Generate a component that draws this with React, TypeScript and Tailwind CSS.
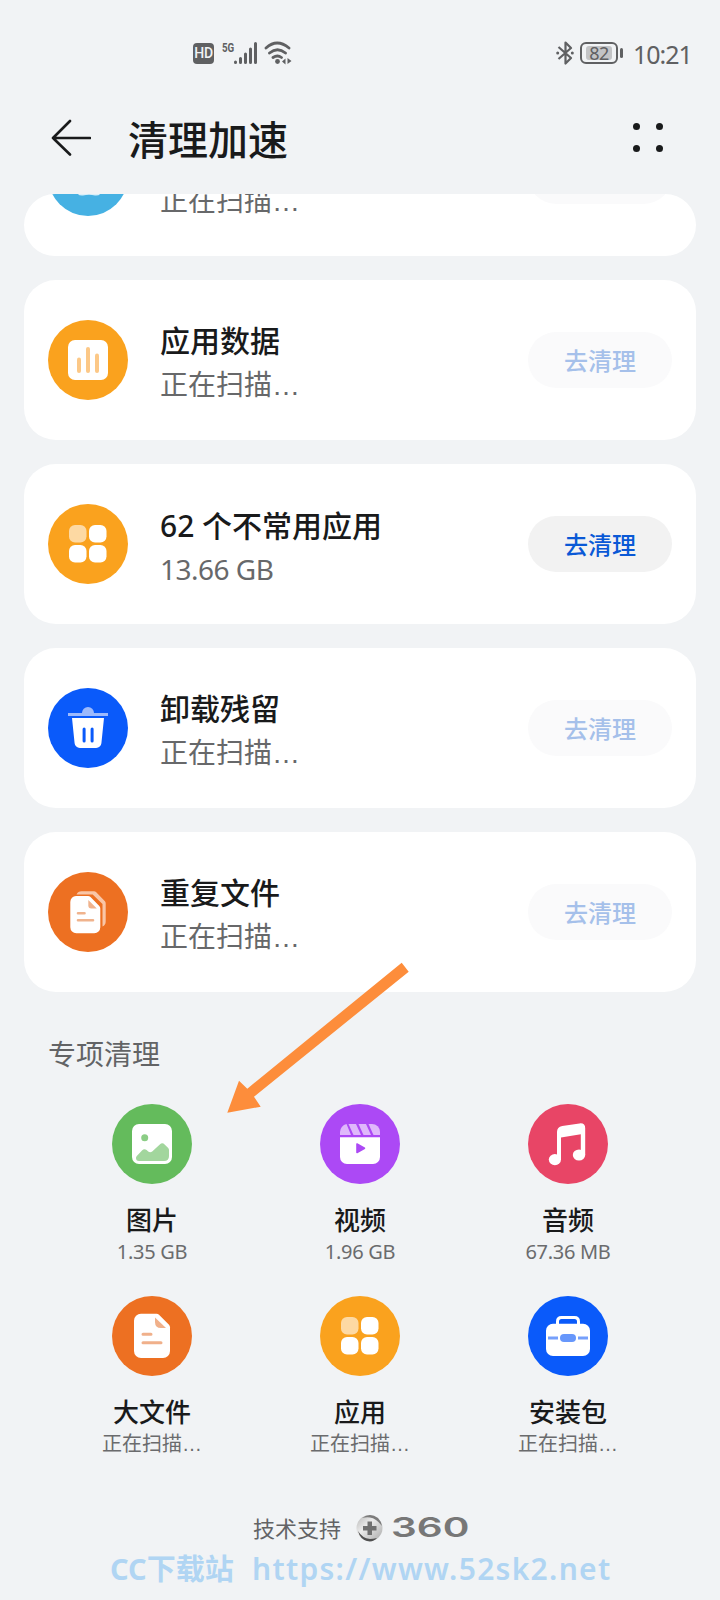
import React from "react";

type IconName = "clean" | "chart" | "apps" | "trash" | "copies" | "image" | "video" | "music" | "file" | "package";

const cards: { icon: IconName; bg: string; title: string; sub: string; active?: boolean }[] = [
    { icon: "chart", bg: "bg-[#faa21e]", title: "应用数据", sub: "正在扫描…" },
    { icon: "apps", bg: "bg-[#faa21e]", title: "62 个不常用应用", sub: "13.66 GB", active: true },
    { icon: "trash", bg: "bg-[#0a5afa]", title: "卸载残留", sub: "正在扫描…" },
    { icon: "copies", bg: "bg-[#ed7022]", title: "重复文件", sub: "正在扫描…" },
];

const special: { icon: IconName; bg: string; title: string; sub: string }[] = [
    { icon: "image", bg: "bg-[#64bb5c]", title: "图片", sub: "1.35 GB" },
    { icon: "video", bg: "bg-[#ac49f5]", title: "视频", sub: "1.96 GB" },
    { icon: "music", bg: "bg-[#e84566]", title: "音频", sub: "67.36 MB" },
    { icon: "file", bg: "bg-[#ed7022]", title: "大文件", sub: "正在扫描…" },
    { icon: "apps", bg: "bg-[#faa21e]", title: "应用", sub: "正在扫描…" },
    { icon: "package", bg: "bg-[#0a5afa]", title: "安装包", sub: "正在扫描…" },
];

const shapes: Record<IconName, React.ReactNode> = {
    clean: <path d="M29 30h24v25q0 5-6 4.500-6-1.500-12 0-6 .5-6-4.500z" fill="#d9eff9" />,
    chart: <>
        <rect x="20" y="20" width="40" height="40" rx="7" />
        <g fill="#fcc887">
            <rect x="29" y="37.5" width="4" height="15.5" rx="2" />
            <rect x="38" y="27" width="4" height="26" rx="2" />
            <rect x="47" y="33.5" width="4" height="19.5" rx="2" />
        </g>
    </>,
    apps: <>
        <rect x="21" y="21" width="17.5" height="17.5" rx="6" fill="#fdd9a3" />
        <rect x="41" y="21" width="17.5" height="17.5" rx="6" />
        <rect x="21" y="41" width="17.5" height="17.5" rx="6" />
        <rect x="41" y="41" width="17.5" height="17.5" rx="6" />
    </>,
    trash: <>
        <path d="M20 25h14a6 6 0 0 1 12 0h14v3H20z" fill="#9dbafc" />
        <path d="M24 30h32l-2.600 25.200a5.200 5.200 0 0 1-5.200 4.800H31.800a5.200 5.200 0 0 1-5.200-4.800z" />
        <rect x="34.6" y="39.5" width="3" height="15" rx="1.5" fill="#0a5afa" />
        <rect x="42.6" y="39.5" width="3" height="15" rx="1.5" fill="#0a5afa" />
    </>,
    copies: <>
        <path d="M28.500 22.500q1.500-3.200 5-3.200H46q1.200 0 2 .8l8.700 9q1 1 1 2.400v18q0 3.500-3.200 5V32L44.700 22.500z" fill="#f9c6a7" />
        <path d="M28 24h12q1.500 0 2.500 1l8.800 9q1 1 1 2.500v18.800a6 6 0 0 1-6 6H28.300a6 6 0 0 1-6-6V30a6 6 0 0 1 5.700-6z" />
        <path d="M40.300 28l8.500 8.500h-5.500a3 3 0 0 1-3-3z" fill="#f0b38d" />
        <path d="M30 41.300h6.500M30 48.300h15" stroke="#f0b38d" strokeWidth="2.600" strokeLinecap="round" />
    </>,
    image: <>
        <rect x="20" y="20" width="40" height="40" rx="7" />
        <circle cx="32.700" cy="33.700" r="3.500" fill="#8bcd85" />
        <path d="M24 54q0-1 .8-1.900l5.200-5.600q2.200-2.400 4.600-.4l1.600 1.400q2 1.600 4 0l7.600-7q2.600-2.300 4.800 0l3.600 3.600q.8.800.8 2V52q0 5-5 5H27q-3 0-3-3z" fill="#a2d69d" />
    </>,
    video: <>
        <g fill="#dfb8fb">
            <path d="M20 31v-3a8 8 0 0 1 6.500-7.900L31 31z" />
            <path d="M28.500 20h7.500l5 11h-7.500z" />
            <path d="M38.500 20H46l5 11h-7.500z" />
            <path d="M48.500 20H52a8 8 0 0 1 8 8v3h-6.500z" />
        </g>
        <path d="M20 33.300h40V53a7 7 0 0 1-7 7H27a7 7 0 0 1-7-7z" />
        <path d="M37 40v8.500l7.500-4.300z" fill="#ac49f5" stroke="#ac49f5" strokeWidth="1.600" strokeLinejoin="round" />
    </>,
    music: <>
        <path d="M29 28q0-5.200 5.200-6L51.500 19.400q5.700-.6 5.700 4.800V51h-4.400V30.200L33 33.400V56h-4z" />
        <ellipse cx="26.900" cy="55.600" rx="6.100" ry="5.600" />
        <ellipse cx="51" cy="51" rx="6.200" ry="5.600" />
    </>,
    file: <>
        <path d="M29 17.700h15.500q1.500 0 2.500 1l10 10q1 1 1 2.500V55a7 7 0 0 1-7 7H29a7 7 0 0 1-7-7V24.700a7 7 0 0 1 7-7z" />
        <path d="M43 21.500L54 32h-5q-6 0-6-6z" fill="#f0b08a" />
        <path d="M31 38.200h8M31 46.800h18" stroke="#f0b08a" strokeWidth="3" strokeLinecap="round" />
    </>,
    package: <>
        <path d="M29.500 29v-3.500q0-4 4-4h13q4 0 4 4V29" fill="none" stroke="#fff" strokeWidth="3" />
        <rect x="18" y="27.700" width="44" height="32.300" rx="7" />
        <path d="M20 40.400h10v3H20zM50 40.400h10v3H50z" fill="#76a0fb" />
        <rect x="32" y="38" width="16" height="8" rx="4" fill="#6797fb" />
    </>,
};

function RoundIcon({ name, bg }: { name: IconName; bg: string }) {
    return <div className={`w-20 h-20 shrink-0 rounded-full ${bg}`}>
        <svg viewBox="0 0 80 80" className="w-20 h-20" fill="#fff">{shapes[name]}</svg>
    </div>;
}

function Sub({ text }: { text: string }) {
    if (!text.endsWith("…")) return <>{text}</>;
    return <span className="tracking-normal">{text.slice(0, -1)}<span className="font-['Liberation_Sans']">…</span></span>;
}

function CardRow({ icon, bg, title, sub, active }: { icon: IconName; bg: string; title?: string; sub: string; active?: boolean }) {
    return <div className="w-full h-40 shrink-0 px-6 flex items-center">
        <RoundIcon name={icon} bg={bg} />
        <div className="ml-8 flex-1 flex flex-col pt-[5px]">
            <div className="h-11 text-[30px] leading-[44px] font-medium text-[#191a1b]">{title}</div>
            <div className="text-[28px] leading-[42px] tracking-[-0.5px] text-[#67686a]"><Sub text={sub} /></div>
        </div>
        <button className={`w-36 h-14 pt-px rounded-full text-2xl font-medium ${active ? "bg-[#f2f2f2] text-[#0a59d6]" : "bg-[#fafafb] text-[#a5c0ea]"}`}>去清理</button>
    </div>;
}

function StatusBar() {
    return <div className="h-[106px] pl-[193px] pr-[29px] pt-[41px] flex items-start text-[#5f6062]">
        <div className="w-[21px] h-[21px] mt-[2px] rounded-[4px] bg-[#5f6062] text-[#f1f3f5] text-[14px] leading-[21px] font-medium text-center tracking-tight font-['Roboto']">HD</div>
        <div className="ml-2 w-3 text-[13px] leading-[13px] font-bold font-['Roboto']"><div className="origin-left scale-x-75">5G</div></div>
        <svg className="w-6 h-6" viewBox="0 0 24 24" stroke="currentColor" strokeWidth="3" strokeLinecap="round">
            <path d="M1.500 21v.5M6.500 17.500v4M11.500 13v8.500M16.500 8v13.500M21.500 2.500v19" />
        </svg>
        <svg className="ml-[6px] w-[30px] h-6" viewBox="0 0 30 24" fill="none" stroke="currentColor" strokeWidth="2.800" strokeLinecap="round">
            <path d="M2 7q11-10 23 0M5.500 12q8-6.500 16 0M9 16.500q4.500-3 8.500 0" />
            <circle cx="13.500" cy="20.500" r="2.400" fill="currentColor" stroke="none" />
            <path d="M21.500 17.500v6l-3.500-3zM23.500 17l4 3-4 3z" fill="currentColor" stroke="none" />
        </svg>
        <div className="flex-1" />
        <svg className="w-[18px] h-6" viewBox="0 0 18 24" fill="none" stroke="currentColor" strokeWidth="2.200" strokeLinejoin="round">
            <path d="M2.500 6l12.500 11L9.500 22.500v-21L15 7 2.500 18" />
            <circle cx="1.700" cy="12" r="1.500" fill="currentColor" stroke="none" />
            <circle cx="16.300" cy="12" r="1.500" fill="currentColor" stroke="none" />
        </svg>
        <div className="ml-[6px] mt-px w-[38px] h-[22px] border-2 border-[#5f6062] rounded-[6px] p-[2px]">
            <div className="w-[26px] h-[14px] ml-[2px] rounded-[3px] bg-[#c3c4c6] text-[18px] leading-[14px] text-center font-['Noto_Sans'] tracking-tight">82</div>
        </div>
        <div className="ml-[2px] mt-[7px] w-[3px] h-[10px] rounded-full bg-[#5f6062]" />
        <div className="ml-[10px] -mt-px w-[58px] text-[25px] leading-7 font-['Noto_Sans'] tracking-[-1px] whitespace-nowrap">10:21</div>
    </div>;
}

export default function App() {
    return <div className="relative w-[720px] h-[1600px] overflow-hidden bg-[#f1f3f5] font-['Noto_Sans','Noto_Sans_CJK_SC',sans-serif]">
        <StatusBar />
        <div className="h-[88px] pl-[51px] pr-[57px] flex items-start text-[#191a1b]">
            <svg className="mt-3 w-10 h-10" viewBox="0 0 40 40" fill="none" stroke="currentColor" strokeWidth="2.600" strokeLinecap="round" strokeLinejoin="round">
                <path d="M19 3L2 20l17 16.500M2 20h37" />
            </svg>
            <h1 className="ml-[37px] mt-1 flex-1 text-[40px] leading-[60px] font-medium">清理加速</h1>
            <div className="mt-[17px] grid grid-cols-2 gap-x-4 gap-y-[15px]">
                {[0, 1, 2, 3].map(i => <div key={i} className="w-[7px] h-[7px] rounded-full bg-current" />)}
            </div>
        </div>

        <div className="px-6 flex flex-col gap-6">
            <div className="h-[62px] rounded-[31px] bg-white overflow-hidden flex flex-col justify-end">
                <CardRow icon="clean" bg="bg-[#46b1e3]" sub="正在扫描…" />
            </div>
            {cards.map(c => <div key={c.title} className="rounded-[32px] bg-white"><CardRow {...c} /></div>)}
        </div>

        <h2 className="mt-[41px] ml-12 text-[28px] leading-[42px] text-[#626365]">专项清理</h2>
        <div className="mt-[29px] mx-12 grid grid-cols-3">
            {special.map(s => <div key={s.title} className="h-48 flex flex-col items-center">
                <RoundIcon name={s.icon} bg={s.bg} />
                <div className="mt-[18px] text-[26px] leading-9 font-medium text-[#191a1b]">{s.title}</div>
                <div className="text-[20px] leading-7 tracking-[-0.3px] text-[#6a6b6d]"><Sub text={s.sub} /></div>
            </div>)}
        </div>

        <div className="mt-6 h-8 pl-[253px] flex items-center">
            <div className="text-[22px] leading-8 text-[#626365]">技术支持</div>
            <svg className="ml-[15px] w-7 h-7" viewBox="0 0 28 28">
                <defs>
                    <linearGradient id="ball" x1="0" y1="0" x2="1" y2="1">
                        <stop offset="0" stopColor="#b5b5b5" />
                        <stop offset=".4" stopColor="#ececec" />
                        <stop offset="1" stopColor="#a8a8a8" />
                    </linearGradient>
                </defs>
                <circle cx="13.500" cy="14" r="13" fill="url(#ball)" />
                <path d="M6 4Q14-2 22 4q3 3 4 8-6-8-12-8.500-4-.5-8 .5z" fill="#7c7c7c" />
                <path d="M2 17q4 7 12 8 3 0 7-1-4 4.500-10 3-7-2-9-10z" fill="#505050" />
                <path d="M11.500 7.500h4.500v4.500h4.500v4.500H16V21h-4.500v-4.500H7V12h4.500z" fill="#707070" />
            </svg>
            <div className="ml-[7px] w-[76px] h-8">
                <div className="origin-left scale-x-[1.5] w-12 text-[27px] leading-8 font-semibold text-[#777] font-['Inter']">360</div>
            </div>
        </div>
        <div className="mt-[5px] pl-[110px] flex items-center text-[#b0d5f3] leading-10 whitespace-pre">
            <div className="w-[142px] text-[29px] font-bold">CC下载站</div>
            <div className="text-[30px] font-semibold tracking-[1.3px]">https://www.52sk2.net</div>
        </div>

        <svg className="absolute left-[220px] top-[950px] w-[200px] h-[170px]" viewBox="220 950 200 170">
            <path d="M227.300 1112.700L239 1080.700l8.300 8 154.400-126 7 9L254 1096.700l6.700 10z" fill="#fd8d3b" />
        </svg>
    </div>;
}
